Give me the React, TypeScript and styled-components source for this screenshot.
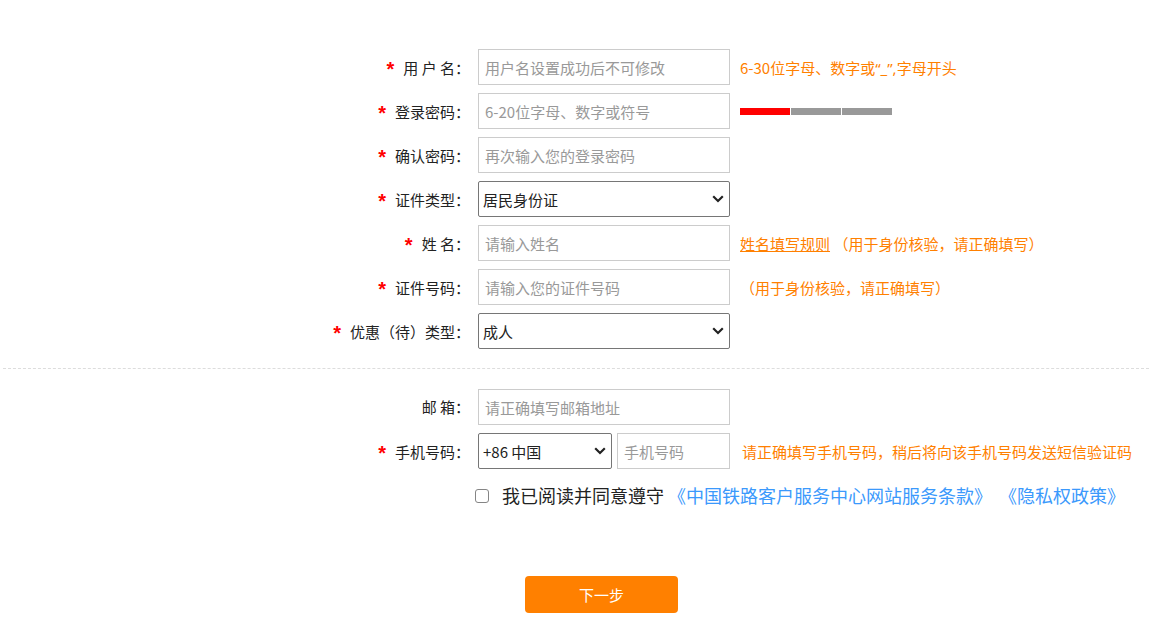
import React from 'react';
import styled, { createGlobalStyle } from 'styled-components';

const Global = createGlobalStyle`
  html, body { margin: 0; padding: 0; background: #fff; }
  body {
    font-family: "Noto Sans CJK SC", "Noto Sans", sans-serif;
    font-size: 15px;
    color: #222;
  }
`;

const Page = styled.div`
  width: 1152px;
  height: 632px;
  overflow: hidden;
  padding-top: 49px;
  box-sizing: border-box;
`;

const Section = styled.div`
  display: flex;
  flex-direction: column;
  gap: 8px;
`;

const Row = styled.div`
  display: flex;
  align-items: center;
  height: 36px;
`;

const Label = styled.label`
  width: 478px;
  padding-right: 8px;
  box-sizing: border-box;
  text-align: right;
  white-space: pre;
  font-size: 15px;
  line-height: 20px;
  color: #222;
`;

const Star = styled.span`
  color: #ff0000;
  font-family: "Liberation Sans", sans-serif;
  font-size: 20px;
  font-weight: bold;
  margin-right: 9px;
  position: relative;
  top: 2px;
`;

const TextInput = styled.input<{ $w?: number }>`
  width: ${(p) => p.$w ?? 252}px;
  height: 36px;
  box-sizing: border-box;
  margin: 0;
  border: 1px solid #ccc;
  border-radius: 0;
  padding: 0 6px;
  font-family: inherit;
  font-size: 15px;
  color: #222;
  outline: none;
  &::placeholder {
    color: #999;
  }
`;

const SelectWrap = styled.div<{ $w?: number }>`
  position: relative;
  display: flex;
  width: ${(p) => p.$w ?? 252}px;
  height: 36px;
`;

const Select = styled.select`
  appearance: none;
  -webkit-appearance: none;
  width: 100%;
  height: 100%;
  box-sizing: border-box;
  margin: 0;
  border: 1px solid #767676;
  border-radius: 2px;
  padding: 0 22px 0 4px;
  font-family: inherit;
  font-size: 15px;
  color: #222;
  background: #fff;
  outline: none;
`;

const Chevron = styled.svg`
  position: absolute;
  right: 6px;
  top: 50%;
  transform: translateY(-50%);
  pointer-events: none;
`;

const Tip = styled.span<{ $ml?: number }>`
  margin-left: ${(p) => p.$ml ?? 10}px;
  color: #ff8000;
  font-size: 15px;
  white-space: nowrap;
`;

const Latin = styled.span`
  font-family: "Noto Sans", sans-serif;
`;

const RuleLink = styled.a`
  color: #ff8000;
  text-decoration: underline;
  cursor: pointer;
`;

const Strength = styled.div`
  display: flex;
  gap: 1px;
  margin-left: 10px;
`;

const Segment = styled.span<{ $on?: boolean }>`
  width: 50px;
  height: 7px;
  background: ${(p) => (p.$on ? '#ff0000' : '#999999')};
`;

const Divider = styled.div`
  margin: 19px 3px 20px;
  border-top: 1px dashed #dddddd;
`;

const PhoneGroup = styled.div`
  display: flex;
  gap: 5px;
`;

const AgreeRow = styled.div`
  display: flex;
  align-items: center;
  height: 30px;
  margin-top: 11px;
  padding-left: 475px;
  font-size: 18px;
  color: #222;
  white-space: pre;
`;

const Check = styled.input`
  appearance: none;
  -webkit-appearance: none;
  width: 14px;
  height: 14px;
  box-sizing: border-box;
  margin: 1px 13px 0 0;
  border: 1px solid #858585;
  border-radius: 3px;
  background: #fff;
`;

const Blue = styled.a<{ $ml?: number }>`
  margin-left: ${(p) => p.$ml ?? 0}px;
  color: #3b99fc;
  text-decoration: none;
  cursor: pointer;
`;

const ButtonRow = styled.div`
  display: flex;
  padding-left: 525px;
  margin-top: 66px;
`;

const NextButton = styled.button`
  width: 153px;
  height: 37px;
  border: none;
  border-radius: 4px;
  background: #ff8000;
  color: #fff;
  font-family: inherit;
  font-size: 15px;
  cursor: pointer;
`;

function Dropdown({ w, value, options }: { w?: number; value: string; options: string[] }) {
  return (
    <SelectWrap $w={w}>
      <Select defaultValue={value}>
        {options.map((o) => (
          <option key={o} value={o}>{o}</option>
        ))}
      </Select>
      <Chevron width="12" height="8" viewBox="0 0 12 8">
        <polyline points="1.2,1.3 6,6 10.8,1.3" fill="none" stroke="#222" strokeWidth="2.2" />
      </Chevron>
    </SelectWrap>
  );
}

export default function App() {
  return (
    <Page>
      <Global />
      <Section>
        <Row>
          <Label><Star>*</Star>用 户 名：</Label>
          <TextInput placeholder="用户名设置成功后不可修改" />
          <Tip>6-30位字母、数字或<Latin>“_”,</Latin>字母开头</Tip>
        </Row>
        <Row>
          <Label><Star>*</Star>登录密码：</Label>
          <TextInput type="password" placeholder="6-20位字母、数字或符号" />
          <Strength>
            <Segment $on />
            <Segment />
            <Segment />
          </Strength>
        </Row>
        <Row>
          <Label><Star>*</Star>确认密码：</Label>
          <TextInput type="password" placeholder="再次输入您的登录密码" />
        </Row>
        <Row>
          <Label><Star>*</Star>证件类型：</Label>
          <Dropdown value="居民身份证" options={['居民身份证', '港澳居民居住证', '护照']} />
        </Row>
        <Row>
          <Label><Star>*</Star>姓 名：</Label>
          <TextInput placeholder="请输入姓名" />
          <Tip><RuleLink>姓名填写规则</RuleLink> （用于身份核验，请正确填写）</Tip>
        </Row>
        <Row>
          <Label><Star>*</Star>证件号码：</Label>
          <TextInput placeholder="请输入您的证件号码" />
          <Tip>（用于身份核验，请正确填写）</Tip>
        </Row>
        <Row>
          <Label><Star>*</Star>优惠（待）类型：</Label>
          <Dropdown value="成人" options={['成人', '儿童', '学生']} />
        </Row>
      </Section>
      <Divider />
      <Section>
        <Row>
          <Label>邮 箱：</Label>
          <TextInput placeholder="请正确填写邮箱地址" />
        </Row>
        <Row>
          <Label><Star>*</Star>手机号码：</Label>
          <PhoneGroup>
            <Dropdown w={134} value="+86 中国" options={['+86 中国', '+852 中国香港']} />
            <TextInput $w={113} placeholder="手机号码" />
          </PhoneGroup>
          <Tip $ml={12}>请正确填写手机号码，稍后将向该手机号码发送短信验证码</Tip>
        </Row>
      </Section>
      <AgreeRow>
        <Check type="checkbox" />
        我已阅读并同意遵守 <Blue>《中国铁路客户服务中心网站服务条款》</Blue><Blue $ml={7}>《隐私权政策》</Blue>
      </AgreeRow>
      <ButtonRow>
        <NextButton>下一步</NextButton>
      </ButtonRow>
    </Page>
  );
}
